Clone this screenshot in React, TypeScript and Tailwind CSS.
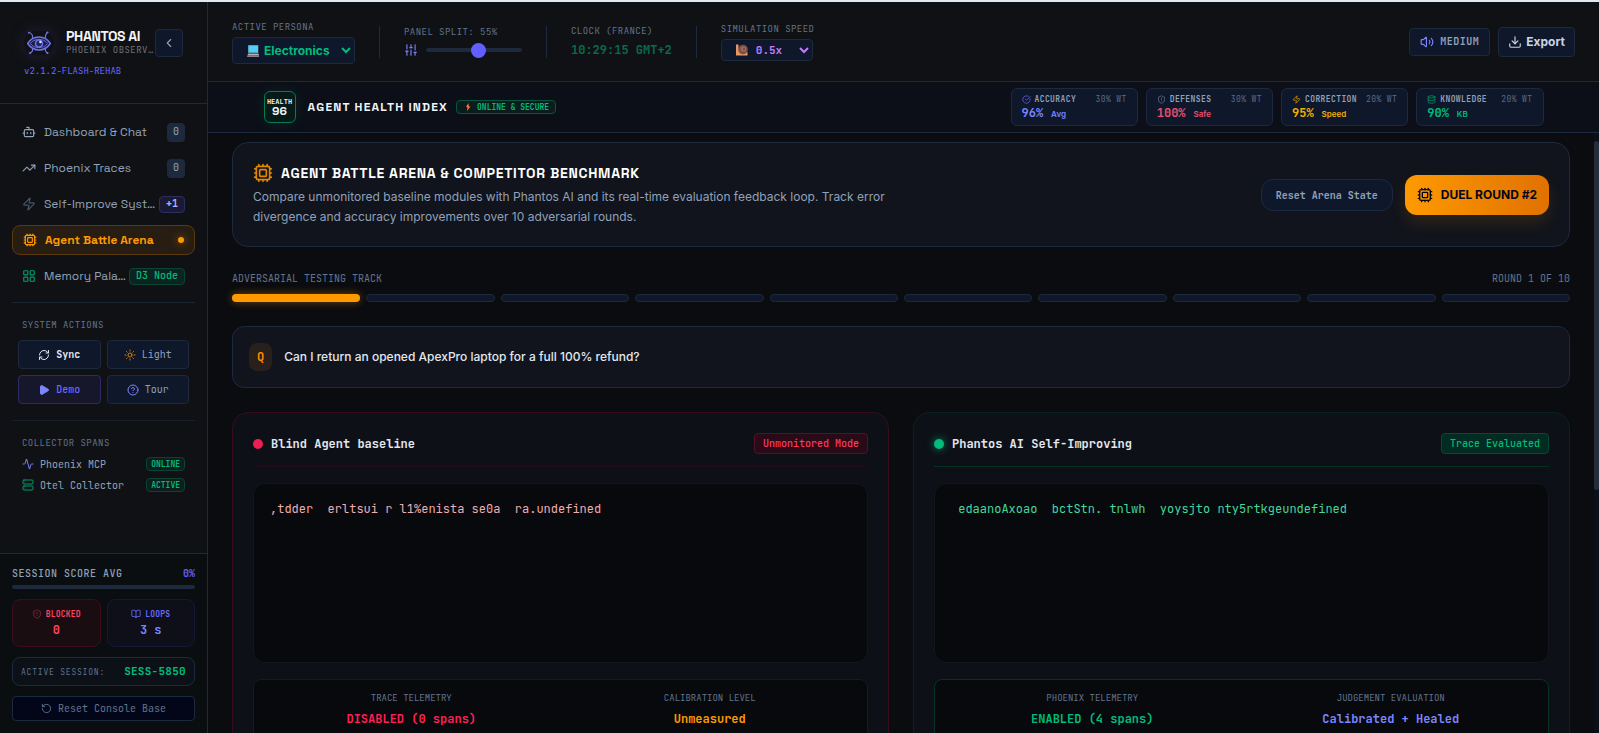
import { useState } from "react";
import {
    Activity,
    BookOpen,
    Bot,
    ChevronLeft,
    CircleCheckBig,
    CircleHelp,
    Cpu,
    Database,
    Download,
    LayoutGrid,
    Play,
    RefreshCw,
    RotateCcw,
    Server,
    ShieldAlert,
    SlidersVertical,
    Sun,
    TrendingUp,
    Volume2,
    Zap,
} from "lucide-react";

const mono = "font-['JetBrains_Mono','DejaVu_Sans_Mono',monospace]";
const display = "font-['Space_Grotesk',Inter,sans-serif]";
const fieldLabel = "text-[9px] leading-[15px] tracking-wider text-slate-500";

const navItems = [
    { label: "Dashboard & Chat", icon: Bot, iconColor: "text-slate-400", badge: "0", badgeClass: "bg-slate-800 text-slate-400 px-1.5 h-[19px]" },
    { label: "Phoenix Traces", icon: TrendingUp, iconColor: "text-slate-400", badge: "0", badgeClass: "bg-slate-800 text-slate-400 px-1.5 h-[19px]" },
    { label: "Self-Improve System", icon: Zap, iconColor: "text-slate-600", badge: "+1", badgeClass: "bg-[#1a1a33] text-indigo-300 border border-[#2c2b63] px-1.5 h-[17px] font-bold" },
    { label: "Agent Battle Arena", icon: Cpu, active: true },
    { label: "Memory Palace", icon: LayoutGrid, iconColor: "text-[#029a69]", badge: "D3 Node", badgeClass: "bg-[#0c2420] text-[#00bc7d] border border-[#0a4534] px-1.5 h-[17px] font-medium" },
];

const metrics = [
    { label: "ACCURACY", weight: "30% WT", value: "96%", unit: "Avg", icon: CircleCheckBig, color: "text-[#7c86ff]", iconColor: "text-[#6468d4]" },
    { label: "DEFENSES", weight: "30% WT", value: "100%", unit: "Safe", icon: ShieldAlert, color: "text-[#e8506c]", iconColor: "text-slate-500" },
    { label: "CORRECTION", weight: "20% WT", value: "95%", unit: "Speed", icon: Zap, color: "text-[#f0b100]", iconColor: "text-[#d99a08]" },
    { label: "KNOWLEDGE", weight: "20% WT", value: "90%", unit: "KB", icon: Database, color: "text-[#00bc7d]", iconColor: "text-[#049a6a]" },
];

const Logo = () => (
    <svg viewBox="0 0 24 24" className="h-6 w-6 shrink-0" fill="none" stroke="#6f74ea" strokeLinecap="round" aria-hidden="true">
        <path d="M.7 12.500C4 7 8 6 12 6S20 7 23.300 12.500C20 17.500 16 19 12 19S4 17.500.7 12.500Z" fill="#1c1e45" strokeWidth="1.500" />
        <path d="M3.500 12.500c2-3 5-4 8.500-4s6.500 1 8.500 4c-2.500 3-5 4-8.500 4s-6.500-1-8.500-4Z" strokeWidth="1" strokeDasharray="1.500 1" />
        <circle cx="12" cy="12.500" r="3.500" fill="#23264f" strokeWidth="1.500" />
        <circle cx="13.400" cy="11" r="1.200" fill="#e0e7ff" stroke="none" />
        <path d="M5.500 7.500V4.500L3.500 2M18.500 7.500V4.500L20 1.500M5.500 17.500v2.500l-2 2M18.500 17.500v2.500l1.500 2" strokeWidth="1.100" />
        <g fill="#6f74ea" stroke="none">
            <circle cx="2" cy="1.800" r="1" />
            <circle cx="20.500" cy="1.500" r="1" />
            <circle cx="3" cy="22" r="1" />
            <circle cx="20.500" cy="22" r="1" />
        </g>
    </svg>
);

const Laptop = () => (
    <svg viewBox="0 0 12 12" className="pointer-events-none absolute top-2 left-[15px] h-3 w-3" aria-hidden="true">
        <rect x="1" y="0" width="10.500" height="8" fill="#5b6b7a" />
        <rect x="1.500" y=".5" width="9.500" height="7" fill="#4fd0f7" />
        <path d="M1 8.500h10.500l.5 2H.5z" fill="#b9a9b5" />
        <path d="M.5 10.500H12V12H0z" fill="#8f7f8e" />
    </svg>
);

const Snail = () => (
    <svg viewBox="0 0 12 12" className="pointer-events-none absolute top-[5px] left-[15px] h-3 w-3" aria-hidden="true">
        <path d="M0 .5h2.500v3L4 8h7.500v3.500H0z" fill="#e59866" />
        <circle cx="7" cy="5.500" r="4.800" fill="#7d5046" />
        <circle cx="7.500" cy="5" r="2.600" fill="#9c6b60" />
        <circle cx="8" cy="5" r="1" fill="#6b4038" />
    </svg>
);

const Sidebar = () => (
    <aside className="flex w-52 shrink-0 flex-col border-r border-slate-800 bg-[#101114]">
        <div className="h-[102px] shrink-0 border-b border-slate-800 px-6 pt-[27px]">
            <div className="flex items-center">
                <div className="flex w-[30px] shrink-0 items-center justify-center rounded-full shadow-[0_0_18px_rgba(99,102,241,0.18)]">
                    <Logo />
                </div>
                <div className="ml-3 w-[88px] shrink-0">
                    <h1 className={`${display} text-sm leading-[14px] font-bold tracking-tight whitespace-nowrap text-slate-100`}>PHANTOS AI</h1>
                    <p className={`${mono} truncate text-[9px] leading-[14px] tracking-wider text-zinc-500`}>PHOENIX OBSERVABILITY</p>
                </div>
                <button aria-label="Collapse sidebar" className="ml-px flex h-7 w-7 shrink-0 items-center justify-center rounded border border-slate-800 bg-slate-900 text-slate-400">
                    <ChevronLeft size={14} />
                </button>
            </div>
            <p className={`${mono} mt-2 text-[9px] leading-3 text-[#6a68ff]`}>v2.1.2-FLASH-REHAB</p>
        </div>

        <nav className="flex flex-col gap-1.5 px-3 pt-[13px]">
            {navItems.map((item) => (
                <button
                    key={item.label}
                    className={`${display} flex h-[30px] items-center gap-2 rounded-lg px-2.5 text-left text-xs ${item.active ? "border border-[#5a3a0c] bg-[#271d12] font-bold text-[#fe9a00]" : "text-slate-400"}`}
                >
                    <item.icon size={14} className={`shrink-0 ${item.iconColor ?? ""}`} />
                    <span className="min-w-0 flex-1 truncate">{item.label}</span>
                    {item.active && <span className="h-1.5 w-1.5 rounded-full bg-[#fe9a00] shadow-[0_0_8px_rgba(254,154,0,0.6)]" />}
                    {item.badge && (
                        <span className={`${mono} -ml-1.5 flex shrink-0 items-center rounded text-[10px] ${item.badgeClass}`}>{item.badge}</span>
                    )}
                </button>
            ))}
        </nav>

        <section className="mx-3 mt-[11px] border-t border-slate-800/80 px-1.5 pt-4 pb-4">
            <h2 className={`${mono} ml-1 text-[9px] leading-3 tracking-wider text-slate-500`}>SYSTEM ACTIONS</h2>
            <div className={`${mono} mt-[9px] grid grid-cols-2 gap-1.5 text-[10px]`}>
                <button className="flex h-[29px] items-center justify-center gap-1.5 rounded border border-slate-800 bg-[#0f172a] font-bold text-slate-200">
                    <RefreshCw size={12} />
                    Sync
                </button>
                <button className="flex h-[29px] items-center justify-center gap-1.5 rounded border border-slate-800 bg-[#0f172a] text-slate-400">
                    <Sun size={12} className="text-[#d08008]" />
                    Light
                </button>
                <button className="flex h-[29px] items-center justify-center gap-1.5 rounded border border-[#2c2b63] bg-[#17172b] font-medium text-[#6a68ff]">
                    <Play size={12} className="fill-current text-[#7c86ff]" />
                    Demo
                </button>
                <button className="flex h-[29px] items-center justify-center gap-1.5 rounded border border-slate-800 bg-[#0f172a] text-slate-400">
                    <CircleHelp size={12} className="text-[#7c86ff]" />
                    Tour
                </button>
            </div>
        </section>

        <section className={`${mono} mx-3 border-t border-slate-800/60 px-2.5 pt-4`}>
            <h2 className="text-[9px] leading-3 tracking-wider text-slate-500">COLLECTOR SPANS</h2>
            <ul className="mt-2 flex flex-col gap-[7px] text-[10px] text-slate-400">
                <li className="flex h-3.5 items-center gap-1.5">
                    <Activity size={12} className="text-[#7c80f5]" />
                    <span className="flex-1">Phoenix MCP</span>
                    <span className="flex h-3.5 items-center rounded border border-[#0a4534] bg-[#0c1f1c] px-1 text-[8px] font-bold text-[#00bc7d]">ONLINE</span>
                </li>
                <li className="flex h-3.5 items-center gap-1.5">
                    <Server size={12} className="text-[#049a6a]" />
                    <span className="flex-1">Otel Collector</span>
                    <span className="flex h-3.5 items-center rounded border border-[#0a4534] bg-[#0c1f1c] px-1 text-[8px] font-bold text-[#00bc7d]">ACTIVE</span>
                </li>
            </ul>
        </section>

        <footer className={`${mono} mt-auto border-t border-slate-800 bg-[#0b0e11] p-3`}>
            <div className="flex justify-between text-[10px] leading-4 font-medium tracking-wider text-slate-400">
                <span>SESSION SCORE AVG</span>
                <span className="font-bold tracking-normal text-[#615fff]">0%</span>
            </div>
            <div className="mt-[3px] h-1 rounded-full bg-slate-800" />
            <div className="mt-2.5 grid grid-cols-2 gap-1.5 text-center">
                <div className="h-12 rounded-lg border border-[#3d0c1f] bg-[#1a0d12] pt-2">
                    <p className="flex items-center justify-center gap-1 text-[8px] leading-3 font-bold tracking-wide text-[#ff4560]">
                        <ShieldAlert size={10} className="opacity-50" />
                        BLOCKED
                    </p>
                    <p className="mt-0.5 text-xs leading-4 font-bold text-[#ff4560]">0</p>
                </div>
                <div className="h-12 rounded-lg border border-[#17173a] bg-[#0e0f18] pt-2">
                    <p className="flex items-center justify-center gap-1 text-[8px] leading-3 font-bold tracking-wide text-[#6a6cff]">
                        <BookOpen size={10} />
                        LOOPS
                    </p>
                    <p className="mt-0.5 text-xs leading-4 font-bold text-[#7c86ff]">3 s</p>
                </div>
            </div>
            <div className="mt-2.5 flex h-[29px] items-center justify-between rounded-lg border border-slate-800 bg-[#0c1017] px-2">
                <span className="text-[8px] tracking-widest text-slate-500">ACTIVE SESSION:</span>
                <span className="text-[11px] font-bold tracking-wide text-[#00bc7d]">SESS-5850</span>
            </div>
            <button className="mt-2.5 flex h-[25px] w-full items-center justify-center gap-1.5 rounded border border-slate-800 bg-[#020618] text-[10px] text-slate-500">
                <RotateCcw size={11} />
                Reset Console Base
            </button>
        </footer>
    </aside>
);

const Header = () => {
    const [split, setSplit] = useState(55);

    return (
        <header className={`${mono} flex h-20 shrink-0 items-center justify-between border-b border-slate-800 bg-[#101114] px-6`}>
            <div className="flex items-center gap-6">
                <div className="flex flex-col gap-0.5">
                    <label htmlFor="persona" className={fieldLabel}>ACTIVE PERSONA</label>
                    <div className="relative">
                        <select id="persona" className="block h-[27px] w-[123px] rounded border border-slate-800 bg-slate-900 pl-[27px] font-['Inter',sans-serif] text-xs font-bold text-[#00bc7d]">
                            <option>Electronics</option>
                            <option>Fashion</option>
                        </select>
                        <Laptop />
                    </div>
                </div>
                <div className="h-8 w-px bg-slate-800" />
                <div className="flex flex-col gap-0.5">
                    <label htmlFor="split" className={fieldLabel}>PANEL SPLIT: {split}%</label>
                    <div className="flex h-4 items-center gap-2">
                        <SlidersVertical size={14} className="text-[#7c80f5]" />
                        <input
                            id="split"
                            type="range"
                            value={split}
                            onChange={(e) => setSplit(Number(e.target.value))}
                            className="h-1 w-24 appearance-none rounded bg-slate-800 [&::-webkit-slider-thumb]:h-[15px] [&::-webkit-slider-thumb]:w-[15px] [&::-webkit-slider-thumb]:appearance-none [&::-webkit-slider-thumb]:rounded-full [&::-webkit-slider-thumb]:bg-[#615fff]"
                        />
                    </div>
                </div>
                <div className="h-8 w-px bg-slate-800" />
                <div className="flex flex-col gap-0.5">
                    <span className={fieldLabel}>CLOCK (FRANCE)</span>
                    <time className="text-xs leading-[18px] font-bold text-[#076c4c]">10:29:15 GMT+2</time>
                </div>
                <div className="h-8 w-px bg-slate-800" />
                <div className="flex flex-col gap-0.5">
                    <label htmlFor="speed" className={fieldLabel}>SIMULATION SPEED</label>
                    <div className="relative">
                        <select id="speed" className="block h-[22px] w-[92px] rounded border border-slate-800 bg-slate-900 pl-[30px] text-[11px] font-bold text-[#c27aff]">
                            <option>0.5x</option>
                            <option>1.0x</option>
                        </select>
                        <Snail />
                    </div>
                </div>
            </div>
            <div className="flex items-center gap-2">
                <button className="flex h-7 items-center gap-1.5 rounded border border-slate-800 bg-slate-900 px-2.5 text-[10px] font-bold tracking-wider text-slate-400">
                    <Volume2 size={14} className="text-[#7c86ff]" />
                    MEDIUM
                </button>
                <button className="flex h-[30px] items-center gap-1 rounded border border-slate-800 bg-slate-900 px-[9px] font-['Inter',sans-serif] text-xs font-bold text-slate-300">
                    <Download size={14} />
                    Export
                </button>
            </div>
        </header>
    );
};

const HealthBar = () => (
    <div className="shrink-0 border-b border-slate-800 bg-[#0c0f17]">
        <div className="mx-auto flex h-[50px] max-w-7xl items-center justify-between">
            <div className="flex items-center">
                <div className="flex h-8 w-8 flex-col items-center justify-center rounded-md border border-[#057a55] bg-[#061b18] text-slate-100 shadow-[0_0_14px_rgba(16,185,129,0.12)]">
                    <span className={`${mono} text-[7px] leading-[8px] font-bold`}>HEALTH</span>
                    <span className={`${display} text-xs leading-[11px] font-bold`}>96</span>
                </div>
                <h2 className={`${display} ml-3 text-xs font-bold tracking-widest text-slate-100`}>AGENT HEALTH INDEX</h2>
                <span className={`${mono} ml-2 flex h-3.5 items-center rounded border border-[#06573f] bg-[#0a1c1b] px-1.5 text-[8px] font-bold text-[#00bc7d]`}>
                    <svg viewBox="0 0 6 8" className="mr-1.5 ml-0.5 h-2 w-1.5" aria-hidden="true">
                        <path d="M3.500 0 1 4h1.500L2 8l3.500-4.500H3.800z" fill="#ff7a3c" />
                    </svg>
                    ONLINE &amp; SECURE
                </span>
            </div>
            <div className="grid w-[533px] grid-cols-4 gap-2">
                {metrics.map((m) => (
                    <div key={m.label} className="h-[38px] rounded-md border border-slate-800 bg-slate-900 px-2.5 pt-1">
                        <div className={`${mono} flex items-center text-[8px] leading-3 tracking-wider text-[#5d6c84]`}>
                            <m.icon size={9} className={`mr-1 ${m.iconColor}`} />
                            <span className="font-bold text-slate-400">{m.label}</span>
                            <span className="ml-auto whitespace-nowrap">{m.weight}</span>
                        </div>
                        <p className={`${mono} text-xs leading-4 font-bold ${m.color}`}>
                            {m.value}
                            <span className="ml-2 font-['Inter',sans-serif] text-[8px] font-semibold">{m.unit}</span>
                        </p>
                    </div>
                ))}
            </div>
        </div>
    </div>
);

type AgentCardProps = {
    name: string;
    status: string;
    output: string;
    stats: { label: string; value: string; color: string }[];
    healed?: boolean;
};

const AgentCard = ({ name, status, output, stats, healed }: AgentCardProps) => (
    <article className={`${mono} rounded-2xl border bg-[#0d1017] p-5 ${healed ? "border-[#0a2320]" : "border-[#380c1f]"}`}>
        <div className={`flex items-center justify-between border-b pb-3 ${healed ? "border-[#04301f]" : "border-[#240c17]"}`}>
            <h3 className="flex items-center gap-2 text-xs font-bold text-slate-200">
                <span className={`h-2.5 w-2.5 rounded-full ${healed ? "bg-[#00bc7d] shadow-[0_0_8px_rgba(0,188,125,0.7)]" : "bg-[#ec1f52]"}`} />
                {name}
            </h3>
            <span
                className={`flex h-[21px] items-center rounded-sm border px-2 text-[10px] font-medium ${healed ? "border-[#044a34] bg-[#022c22] text-[#00bc7d]" : "border-[#560f28] bg-[#2b0a18] text-[#ff3a5c]"}`}
            >
                {status}
            </span>
        </div>
        <div className={`mt-4 h-[180px] rounded-xl border border-[#13171c] bg-[#07090c] p-4 text-xs leading-[18px] whitespace-pre ${healed ? "text-[#46d69e]" : "text-[#f0adb3]"}`}>
            {output}
        </div>
        <div className={`mt-4 grid grid-cols-2 gap-2 rounded-lg border bg-[#07090c] p-3 text-center ${healed ? "border-[#063326]" : "border-[#171b20]"}`}>
            {stats.map((stat) => (
                <div key={stat.label}>
                    <p className="text-[9px] leading-3 text-slate-500">{stat.label}</p>
                    <p className={`mt-1.5 text-xs leading-[18px] font-bold ${stat.color}`}>{stat.value}</p>
                </div>
            ))}
        </div>
    </article>
);

const Arena = () => (
    <main className="flex min-h-0 flex-1">
        <div className="min-w-0 flex-1 overflow-hidden px-6 pt-[9px]">
            <section className="flex items-center justify-between rounded-2xl border border-slate-800 bg-[#11141c] px-5 pt-5 pb-[19px]">
                <div className="max-w-2xl">
                    <h2 className={`${display} flex h-5 items-center gap-2 text-sm font-bold tracking-wider text-white`}>
                        <Cpu size={20} className="text-[#e08700]" />
                        AGENT BATTLE ARENA &amp; COMPETITOR BENCHMARK
                    </h2>
                    <p className="mt-1 text-xs leading-5 text-slate-400">
                        Compare unmonitored baseline modules with Phantos AI and its real-time evaluation feedback loop. Track error divergence and accuracy improvements over 10 adversarial rounds.
                    </p>
                </div>
                <div className="flex items-center gap-3">
                    <button className={`${mono} h-8 rounded-xl border border-slate-800 bg-slate-900 px-3.5 text-[10px] font-bold text-slate-400`}>Reset Arena State</button>
                    <button className="flex h-10 items-center gap-2 rounded-xl bg-linear-to-r from-[#fe9a00] to-[#e17100] px-3 text-xs font-bold text-slate-950 shadow-[0_8px_16px_rgba(254,154,0,0.12)]">
                        <Cpu size={16} />
                        DUEL ROUND #2
                    </button>
                </div>
            </section>

            <section className="mt-6">
                <div className={`${mono} flex justify-between text-[10px] leading-4 text-slate-500`}>
                    <span>ADVERSARIAL TESTING TRACK</span>
                    <span>ROUND 1 OF 10</span>
                </div>
                <div className="mt-[7px] grid grid-cols-10 gap-1.5">
                    {Array.from({ length: 10 }, (_, idx) => (
                        <div
                            key={idx}
                            className={`h-2 rounded-full ${idx === 0 ? "bg-[#fe9a00] shadow-[0_0_8px_rgba(254,154,0,0.4)]" : "border border-slate-800 bg-slate-900"}`}
                        />
                    ))}
                </div>
            </section>

            <section className="mt-6 flex items-center gap-3 rounded-xl border border-slate-800 bg-[#11141d] p-4">
                <span className={`${mono} flex h-7 items-center rounded-lg bg-[#291f1b] px-2 text-xs font-bold text-[#ff8904]`}>Q</span>
                <p className="text-xs font-medium text-slate-200">Can I return an opened ApexPro laptop for a full 100% refund?</p>
            </section>

            <section className="mt-6 grid grid-cols-2 gap-6">
                <AgentCard
                    name="Blind Agent baseline"
                    status="Unmonitored Mode"
                    output=",tdder  erltsui r l1%enista se0a  ra.undefined"
                    stats={[
                        { label: "TRACE TELEMETRY", value: "DISABLED (0 spans)", color: "text-[#ff2056]" },
                        { label: "CALIBRATION LEVEL", value: "Unmeasured", color: "text-[#fe9a00]" },
                    ]}
                />
                <AgentCard
                    healed
                    name="Phantos AI Self-Improving"
                    status="Trace Evaluated"
                    output=" edaanoAxoao  bctStn. tnlwh  yoysjto nty5rtkgeundefined"
                    stats={[
                        { label: "PHOENIX TELEMETRY", value: "ENABLED (4 spans)", color: "text-[#00bc7d]" },
                        { label: "JUDGEMENT EVALUATION", value: "Calibrated + Healed", color: "text-[#7c86ff]" },
                    ]}
                />
            </section>
        </div>
        <div className="w-[5px] shrink-0 bg-[#0b0f1a] pt-2" aria-hidden="true">
            <div className="h-[59%] rounded-full bg-[#242d3a]" />
        </div>
    </main>
);

const App = () => {
    return (
        <div className="flex h-screen overflow-hidden border-t-2 border-slate-200 bg-[#0b0c10] font-['Inter',sans-serif] text-slate-200">
            <Sidebar />
            <div className="flex min-w-0 flex-1 flex-col">
                <Header />
                <HealthBar />
                <Arena />
            </div>
        </div>
    );
};

export default App;
